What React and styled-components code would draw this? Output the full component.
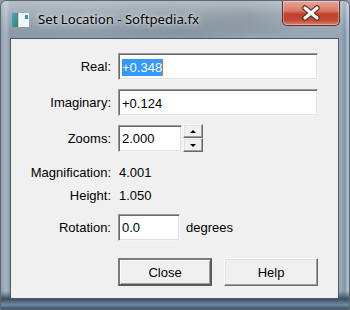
import React from 'react';
import styled, { createGlobalStyle } from 'styled-components';

const Global = createGlobalStyle`
  html, body { margin: 0; padding: 0; }
  body { width: 350px; height: 310px; overflow: hidden; background: #8c9cab; }
  #root { width: 350px; height: 310px; }
`;

const Window = styled.div`
  position: relative;
  width: 350px;
  height: 310px;
  box-sizing: border-box;
  display: flex;
  flex-direction: column;
  padding: 0 10px 10px 9px;
  border: 1px solid #5b6874;
  border-radius: 6px 6px 0 0;
  background:
    linear-gradient(to bottom, rgba(255,255,255,0.35), rgba(255,255,255,0) 30px),
    radial-gradient(ellipse 90px 30px at 175px 18px, rgba(70,80,90,0.25), rgba(70,80,90,0) 100%),
    radial-gradient(ellipse 60px 22px at 250px 14px, rgba(60,70,80,0.25), rgba(60,70,80,0) 100%),
    linear-gradient(to bottom, rgba(0,0,0,0) 290px, #3d5061 298px, #6d8ba3 304px, #2f4150 309px),
    linear-gradient(to right, #8e9eac 0px, #a8b6c1 5px, #8b9aa7 9px, #98a7b3 340px, #7f95a7 344px, #b7c7d3 347px, #6a7f90 350px),
    #a1afbb;
`;

const TitleBar = styled.div`
  height: 37px;
  display: flex;
  align-items: flex-start;
  margin-right: -10px;
`;

const AppIcon = styled.svg`
  margin: 12px 0 0 2px;
  flex: none;
`;

const Title = styled.div`
  margin: 9px 0 0 9px;
  font-family: "Noto Sans", "Open Sans", sans-serif;
  font-size: 13.2px;
  color: #000;
  line-height: 19px;
  text-shadow: 0 0 8px rgba(255,255,255,0.9), 0 0 3px rgba(255,255,255,0.8);
`;

const CloseButton = styled.div`
  margin-left: auto;
  margin-right: 9px;
  width: 58px;
  height: 25px;
  box-sizing: border-box;
  border: 1px solid #5d3029;
  border-top: none;
  border-radius: 0 0 5px 5px;
  background: linear-gradient(to bottom, #e8a798 0%, #d97a66 40%, #c2402b 55%, #c24a36 80%, #d9826d 100%);
  box-shadow: inset 0 0 0 1px rgba(255,255,255,0.35);
  display: flex;
  align-items: center;
  justify-content: center;
`;

const Panel = styled.div`
  flex: 1;
  background: #f0f0f0;
  border: 1px solid #4d5a66;
  display: flex;
  flex-direction: column;
  padding-top: 14px;
  font-family: "Liberation Sans", Arial, sans-serif;
  font-size: 13px;
  color: #000;
`;

const Row = styled.div`
  display: grid;
  grid-template-columns: 100px auto;
  column-gap: ${p => p.$gap ?? 7}px;
  align-items: center;
  height: ${p => p.$h}px;
  margin-top: ${p => p.$mt || 0}px;
`;

const Label = styled.div`
  text-align: right;
  white-space: nowrap;
`;

const Cell = styled.div`
  display: flex;
  align-items: center;
  gap: ${p => p.$gap || 0}px;
`;

const Value = styled.div`
  padding-left: 1px;
`;

const Field = styled.div`
  width: ${p => p.$w}px;
  height: 27px;
  box-sizing: border-box;
  background: #fff;
  border-style: solid;
  border-width: 1px;
  border-color: #9a9a9a #f4f4f4 #f4f4f4 #9a9a9a;
  box-shadow: inset 1px 1px 0 #6a6a6a, inset -1px -1px 0 #e3e3e3;
  display: flex;
  align-items: center;
  padding-left: 3px;
  padding-top: 1px;
`;

const Selected = styled.span`
  background: #3399ff;
  color: #fff;
  line-height: 17px;
  border-right: 1px solid #e07a1a;
`;

const Spinner = styled.div`
  display: flex;
  flex-direction: column;
  margin-left: 1px;
`;

const SpinButton = styled.div`
  width: 20px;
  height: 14px;
  box-sizing: border-box;
  background: #f0f0f0;
  border-style: solid;
  border-width: 1px;
  border-color: #f8f8f8 #6a6a6a #6a6a6a #f8f8f8;
  box-shadow: inset -1px -1px 0 #a0a0a0, inset 1px 1px 0 #e3e3e3;
  display: flex;
  align-items: center;
  justify-content: center;
`;

const Arrow = styled.div`
  width: 0;
  height: 0;
  border-left: 3px solid transparent;
  border-right: 3px solid transparent;
  ${p => p.$down
    ? 'border-top: 3px solid #000;'
    : 'border-bottom: 3px solid #000;'}
`;

const Button = styled.div`
  width: 94px;
  height: 28px;
  box-sizing: border-box;
  background: #f0f0f0;
  border-style: solid;
  border-width: ${p => (p.$default ? 2 : 1)}px;
  border-color: ${p => (p.$default ? '#7a7a7a #5a5a5a #5a5a5a #7a7a7a' : '#fcfcfc #6a6a6a #6a6a6a #fcfcfc')};
  box-shadow: ${p => (p.$default
    ? 'inset 1px 1px 0 #fcfcfc, inset -1px -1px 0 #a0a0a0'
    : 'inset -1px -1px 0 #a0a0a0, inset 1px 1px 0 #e3e3e3')};
  display: flex;
  align-items: center;
  justify-content: center;
`;

const ButtonRow = styled.div`
  display: flex;
  gap: 12px;
  margin-top: 17px;
  padding-left: 107px;
`;

export default function App() {
  return (
    <>
      <Global />
      <Window>
        <TitleBar>
          <AppIcon width="17" height="14" viewBox="0 0 17 14">
            <defs>
              <linearGradient id="ig" x1="0" y1="0" x2="1" y2="1">
                <stop offset="0" stopColor="#4aa6cf" />
                <stop offset="1" stopColor="#2e8a50" />
              </linearGradient>
            </defs>
            <rect x="0" y="0" width="17" height="14" fill="#f3f5f7" />
            <rect x="0" y="0" width="6" height="14" fill="url(#ig)" />
            <rect x="6" y="0" width="1" height="14" fill="#c8d2da" />
            <rect x="13" y="2" width="3" height="4" fill="#3d8fc0" />
          </AppIcon>
          <Title>Set Location - Softpedia.fx</Title>
          <CloseButton>
            <svg width="20" height="16" viewBox="0 0 20 16">
              <path d="M4 3 L16 13 M16 3 L4 13" stroke="#5a2a22" strokeWidth="5.5" strokeLinecap="round" />
              <path d="M4 3 L16 13 M16 3 L4 13" stroke="#ffffff" strokeWidth="3.2" strokeLinecap="round" />
            </svg>
          </CloseButton>
        </TitleBar>
        <Panel>
          <Row $h={27}>
            <Label>Real:</Label>
            <Cell>
              <Field $w={200}><Selected>+0.348</Selected></Field>
            </Cell>
          </Row>
          <Row $h={27} $mt={9}>
            <Label>Imaginary:</Label>
            <Cell>
              <Field $w={200}>+0.124</Field>
            </Cell>
          </Row>
          <Row $h={28} $mt={8}>
            <Label>Zooms:</Label>
            <Cell>
              <Field $w={64}>2.000</Field>
              <Spinner>
                <SpinButton><Arrow /></SpinButton>
                <SpinButton><Arrow $down /></SpinButton>
              </Spinner>
            </Cell>
          </Row>
          <Row $h={23} $mt={9}>
            <Label>Magnification:</Label>
            <Value>4.001</Value>
          </Row>
          <Row $h={23}>
            <Label>Height:</Label>
            <Value>1.050</Value>
          </Row>
          <Row $h={28} $mt={6}>
            <Label>Rotation:</Label>
            <Cell $gap={6}>
              <Field $w={62}>0.0</Field>
              <span>degrees</span>
            </Cell>
          </Row>
          <ButtonRow>
            <Button $default>Close</Button>
            <Button>Help</Button>
          </ButtonRow>
        </Panel>
      </Window>
    </>
  );
}
